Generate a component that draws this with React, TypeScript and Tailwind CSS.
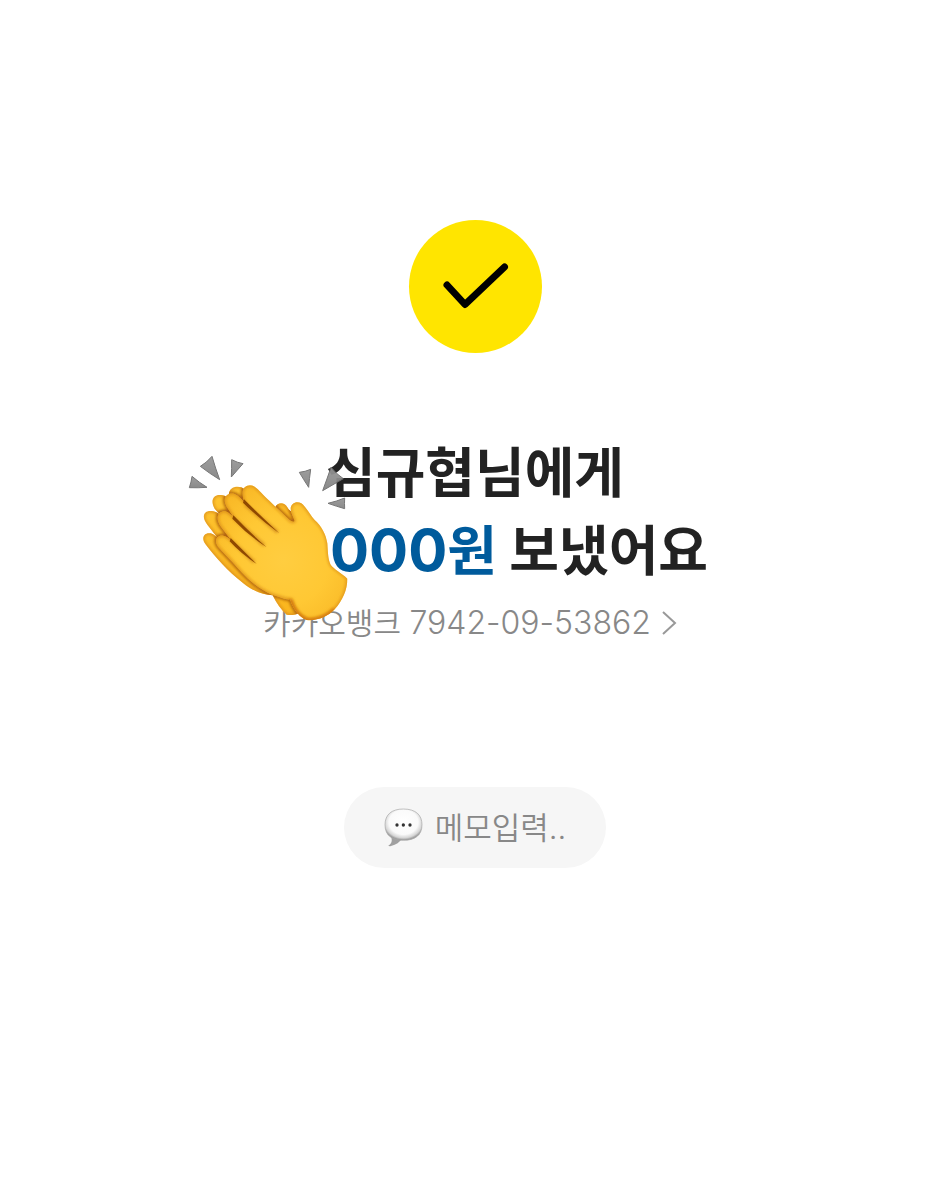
const FRONT_HAND =
  "M114 320 C100 300 112 284 130 287 C140 289 148 296 156 304 L124 262 C102 232 116 212 136 214 C146 216 154 226 164 236 L140 200 C124 172 144 156 164 162 C178 168 186 180 198 192 C192 184 188 174 188 162 C186 140 206 130 224 140 C236 148 250 166 268 182 C288 202 310 222 326 238 C334 246 342 248 344 242 C340 230 332 218 332 206 C332 190 350 182 364 190 C378 200 388 222 404 240 C424 258 438 282 442 310 C444 338 444 358 452 374 C462 388 484 398 502 416 C502 450 488 480 464 508 C444 530 408 544 380 540 C362 534 342 514 330 478 C318 480 298 470 276 464 C240 450 206 420 184 396 C158 366 136 344 114 320 Z";

const BACK_HAND =
  "M76 312 C62 292 74 276 92 280 C102 284 110 290 116 298 L82 254 C60 226 76 208 100 214 C110 216 118 222 124 228 L104 206 C88 178 104 160 128 166 C136 168 142 172 148 176 C140 144 166 136 184 142 L286 202 C292 186 314 186 322 202 C326 210 332 214 342 218 L356 240 L346 470 L362 518 C344 526 332 526 320 524 C302 508 290 490 278 466 C246 464 214 450 188 428 C144 394 106 352 76 312 Z";

const CLAP_MARKS = [
  "M61 79 Q80 68 96 49 Q106 84 119 119 Q88 100 61 79 Z",
  "M155 59 Q172 68 189 71 Q172 90 154 111 Q155 86 155 59 Z",
  "M36 109 Q58 128 81 142 Q54 144 28 143 Q34 126 36 109 Z",
  "M358 97 Q376 95 392 88 Q388 116 386 142 Q371 119 358 97 Z",
  "M453 82 Q470 103 490 116 Q459 134 428 152 Q441 117 453 82 Z",
  "M444 190 Q470 184 494 174 Q493 190 494 206 Q469 199 444 190 Z",
];

function ClapIcon() {
  return (
    <svg
      viewBox="0 0 570 600"
      className="pointer-events-none absolute top-[9px] left-1/2 h-[200px] w-[190px] -translate-x-[295px]"
      aria-hidden="true"
    >
      <defs>
        <radialGradient id="front" cx="310" cy="360" r="250" gradientUnits="userSpaceOnUse">
          <stop offset="0" stopColor="#ffcd40" />
          <stop offset="0.55" stopColor="#ffc834" />
          <stop offset="1" stopColor="#f9b826" />
        </radialGradient>
        <linearGradient id="back" x1="80" y1="160" x2="340" y2="520" gradientUnits="userSpaceOnUse">
          <stop offset="0" stopColor="#ffc631" />
          <stop offset="0.5" stopColor="#f9b622" />
          <stop offset="1" stopColor="#fbb71f" />
        </linearGradient>
        <linearGradient id="mark" x1="0" y1="0" x2="0" y2="1">
          <stop offset="0" stopColor="#969696" />
          <stop offset="1" stopColor="#828282" />
        </linearGradient>
        <clipPath id="frontClip">
          <path d={FRONT_HAND} />
        </clipPath>
        <clipPath id="backClip">
          <path d={BACK_HAND} />
        </clipPath>
        <filter id="soft" x="-20%" y="-20%" width="140%" height="140%">
          <feGaussianBlur stdDeviation="4" />
        </filter>
        <filter id="crease" x="-20%" y="-20%" width="140%" height="140%">
          <feGaussianBlur stdDeviation="1.5" />
        </filter>
      </defs>

      <g fill="url(#mark)" stroke="#6c6c6c" strokeWidth="3" strokeLinejoin="round" opacity="0.93">
        {CLAP_MARKS.map((d) => (
          <path key={d} d={d} />
        ))}
      </g>

      {/* back hand */}
      <path d={BACK_HAND} fill="url(#back)" />
      <g clipPath="url(#backClip)">
        <path d={BACK_HAND} fill="none" stroke="#d98a1a" strokeWidth="7" filter="url(#soft)" />
        <path d={FRONT_HAND} fill="none" stroke="#a85a08" strokeWidth="9" filter="url(#soft)" />
      </g>

      {/* front hand */}
      <path d={FRONT_HAND} fill="url(#front)" />
      <g clipPath="url(#frontClip)">
        <path d={FRONT_HAND} fill="none" stroke="#dc8f16" strokeWidth="7" filter="url(#soft)" />
        <path
          d="M464 508 C444 530 408 544 380 540 C362 534 342 514 330 478"
          fill="none"
          stroke="#d67c10"
          strokeWidth="14"
          filter="url(#soft)"
        />
      </g>

      {/* finger creases */}
      <g fill="none" stroke="#d28c1a" strokeWidth="9" strokeLinecap="round" filter="url(#soft)">
        <path d="M198 196 L290 274" />
        <path d="M166 238 L250 314" />
        <path d="M158 306 L220 364" />
      </g>
      <g fill="#8f4a04" filter="url(#crease)">
        <path d="M192 178 Q234 220 298 280 Q242 240 189 188 Z" />
        <path d="M160 226 Q206 274 260 322 Q202 284 157 236 Z" />
        <path d="M152 294 Q190 332 230 372 Q184 342 149 304 Z" />
      </g>
    </svg>
  );
}

function BubbleIcon() {
  return (
    <svg viewBox="23 28 117 117" className="size-[39px]" aria-hidden="true">
      <defs>
        <radialGradient id="bubble" cx="0.5" cy="0.42" r="0.56">
          <stop offset="0" stopColor="#fff" />
          <stop offset="0.7" stopColor="#fafafa" />
          <stop offset="0.9" stopColor="#d5d5d5" />
          <stop offset="1" stopColor="#a0a0a0" />
        </radialGradient>
      </defs>
      <path d="M42 108 C50 126 46 134 37 140 C36 143 40 143 44 142 C60 138 70 130 77 120 Z" fill="#a0a0a0" />
      <path
        d="M81 31 C119 31 137 50 137 78 C137 110 116 125 81 125 C46 125 26 110 26 78 C26 48 46 31 81 31 Z"
        fill="url(#bubble)"
        stroke="#a6a6a6"
        strokeWidth="2"
      />
      <g fill="#333">
        <circle cx="62" cy="79" r="5" />
        <circle cx="81" cy="79" r="5" />
        <circle cx="101" cy="79" r="5" />
      </g>
    </svg>
  );
}

export default function App() {
  return (
    <main className="flex min-h-screen flex-col items-center bg-white pt-[220px] font-['Inter','Noto_Sans_CJK_KR',sans-serif]">
      <div className="flex size-[133px] items-center justify-center rounded-full bg-[#ffe500]">
        <svg viewBox="0 0 68 48" className="h-12 w-17" aria-hidden="true">
          <path
            d="M6 22 L24 41.500 L63.500 4"
            fill="none"
            stroke="#000"
            strokeWidth="7"
            strokeLinecap="round"
            strokeLinejoin="round"
          />
        </svg>
      </div>

      <section className="relative mt-[78px] flex w-full flex-col items-center">
        <h1 className="flex flex-col items-center font-['Noto_Sans_CJK_KR',sans-serif] text-[54px] leading-[78px] font-bold text-[#222]">
          <span>심규협님에게</span>
          <span className="pl-22 whitespace-nowrap">
            <span className="text-[#005b9c]">
              <span className="font-['Inter',sans-serif] text-[58px]">000</span>원
            </span>{" "}
            보냈어요
          </span>
        </h1>

        <a href="#account" className="mt-3 mr-2 flex items-center gap-2 text-[#888]">
          <span className="text-[30px] leading-[44px] whitespace-nowrap">
            <span className="font-[350]">카카오뱅크</span>{" "}
            <span className="text-[32px] font-[350]">7942-09-53862</span>
          </span>
          <svg viewBox="0 0 20 28" className="h-7 w-5" aria-hidden="true">
            <path d="M4 3 L16 14 L4 25" fill="none" stroke="#999" strokeWidth="2" />
          </svg>
        </a>
        <ClapIcon />
      </section>

      <button
        type="button"
        className="mt-[142px] flex h-[81px] items-center gap-3 rounded-full bg-[#f6f6f6] px-10 text-[31px] leading-[44px] font-[350] text-[#888]"
      >
        <BubbleIcon />
        메모입력..
      </button>
    </main>
  );
}
